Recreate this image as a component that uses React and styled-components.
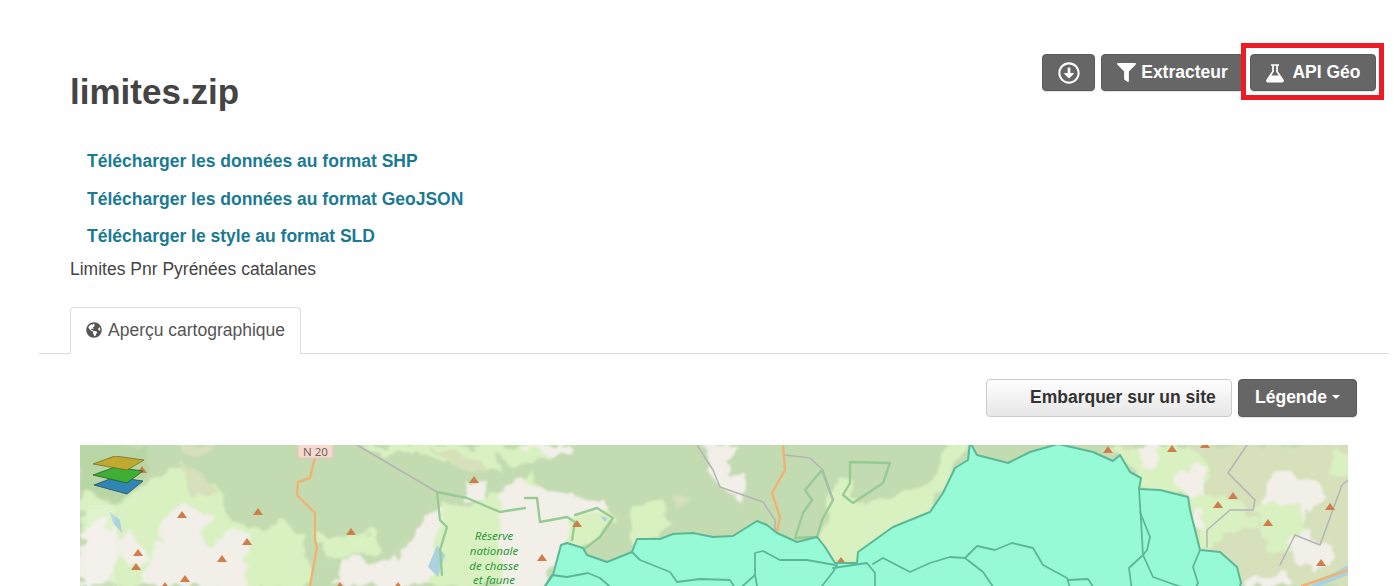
import React from "react";
import styled, { createGlobalStyle } from "styled-components";
import { FaFilter, FaGlobeAmericas, FaRegArrowAltCircleDown } from "react-icons/fa";

const GlobalStyle = createGlobalStyle`
    html, body {
        margin: 0;
        height: 586px;
        overflow: hidden;
        background: #fff;
    }
    body {
        font-family: "Liberation Sans", Arial, sans-serif;
        font-size: 17.5px;
        color: #444;
    }
`;

const Page = styled.div`
    width: 1350px;
    margin-left: 39px;
    padding-top: 54px;
`;

const Header = styled.header`
    display: flex;
    justify-content: space-between;
    align-items: flex-start;
    padding: 0 13px 0 31px;
`;

const Title = styled.h1`
    margin: 19px 0 0;
    font-size: 35px;
    line-height: 38px;
    font-weight: 700;
    color: #444;
`;

const Actions = styled.div`
    display: flex;
    gap: 6px;
`;

const Button = styled.a`
    display: inline-flex;
    align-items: center;
    justify-content: center;
    gap: 5px;
    box-sizing: border-box;
    width: ${p => p.$width}px;
    height: ${p => p.$height || 37}px;
    padding-bottom: ${p => (p.$height ? 2 : 0)}px;
    border: 1px solid #5a5a5a;
    border-radius: 4px;
    background: #666;
    color: #fff;
    font-weight: 700;
    font-size: 17.5px;
    white-space: nowrap;
    box-shadow: 0 1px 1px rgba(0, 0, 0, 0.12);
`;

const Highlighted = styled.div`
    position: relative;

    &::after {
        content: "";
        position: absolute;
        left: -9px;
        top: -11px;
        right: -8px;
        bottom: -9px;
        border: 5px solid #ed1c24;
    }
`;

const Links = styled.ul`
    list-style: none;
    margin: 39px 0 0;
    padding: 0 0 0 48px;
`;

const LinkItem = styled.li`
    font-weight: 700;
    line-height: 22px;
    color: #1a7a94;
    margin-bottom: 15.5px;

    &:last-child {
        margin-bottom: 0;
    }
`;

const Description = styled.p`
    margin: 11px 0 0;
    padding-left: 31px;
    line-height: 22px;
`;

const TabBar = styled.div`
    display: flex;
    margin-top: 27px;
    padding-left: 31px;
    border-bottom: 1px solid #ddd;
    height: 46px;
`;

const Tab = styled.div`
    display: flex;
    align-items: center;
    gap: 6px;
    box-sizing: border-box;
    width: 231px;
    height: 47px;
    padding: 0 0 2px 15px;
    background: #fff;
    border: 1px solid #ddd;
    border-bottom: none;
    border-radius: 4px 4px 0 0;
    color: #555;
`;

const Toolbar = styled.div`
    display: flex;
    justify-content: flex-end;
    gap: 6px;
    margin-top: 25px;
    padding-right: 32px;
`;

const EmbedButton = styled.a`
    display: flex;
    align-items: center;
    box-sizing: border-box;
    width: 246px;
    height: 38px;
    padding: 0 0 2px 43px;
    border: 1px solid #ccc;
    border-radius: 4px;
    background: linear-gradient(#fff, #e6e6e6);
    color: #333;
    font-weight: 700;
`;

const Caret = styled.span`
    width: 0;
    height: 0;
    border-left: 4px solid transparent;
    border-right: 4px solid transparent;
    border-top: 4px solid #fff;
`;

const FlaskIcon = styled.svg`
    flex: none;
    margin-right: 2px;
`;

const MapFrame = styled.div`
    position: relative;
    width: 1268px;
    height: 141px;
    margin: 28px 0 0 41px;
    overflow: hidden;
`;

const MapCanvas = styled.svg`
    display: block;
`;

const ZoomGhost = styled.div`
    position: absolute;
    left: 7px;
    top: 60px;
    width: 28px;
    height: 90px;
    border-radius: 4px;
    background: rgba(255, 255, 255, 0.16);
`;

const LayersIcon = styled.svg`
    position: absolute;
    left: 13px;
    top: 11px;
`;

const forest = "#c3dbb0";
const light = "#d9f1c1";
const scrub = "#d6e0bb";
const bare = "#f2efe9";

// terrain patches, in map coordinates
const patches = [
    ["#b8d5a6", "0,0 68,0 72,30 40,50 0,52"],
    [scrub, "100,0 135,0 128,10 102,12"],
    [light, "0,52 33,55 73,38 90,25 137,38 147,72 170,82 203,78 225,92 228,141 0,141"],
    [scrub, "98,20 130,30 138,50 108,50"],
    [bare, "0,90 28,70 40,100 30,141 0,141"],
    [bare, "84,72 105,60 130,70 118,90 135,100 155,85 172,90 160,110 170,141 60,141 75,105"],
    [bare, "38,90 60,92 70,115 50,125 40,110"],
    [light, "240,90 295,88 305,108 270,112 240,108"],
    [bare, "262,112 300,118 330,105 345,68 362,65 358,100 350,141 255,141"],
    [light, "320,10 420,30 425,0 270,0"],
    [scrub, "345,5 395,10 410,30 385,25"],
    [bare, "385,40 408,40 412,52 385,52"],
    [light, "362,60 420,50 450,30 470,60 420,141 350,141"],
    [bare, "420,50 435,30 465,45 500,50 515,55 530,50 530,75 503,103 480,100 470,120 465,141 420,141"],
    [light, "495,70 530,65 532,80 505,105 485,100"],
    [light, "420,0 490,0 470,12 430,20"],
    [bare, "440,2 490,0 487,8 460,10"],
    [light, "550,55 580,62 590,75 580,94 557,94 545,82"],
    [scrub, "592,50 610,55 605,66 595,62"],
    [bare, "620,0 660,0 647,18 670,35 660,55 640,42 633,28 627,15"],
    [light, "740,92 750,52 760,32 780,58 820,48 850,38 850,70 777,118 755,118"],
    [forest, "780,20 808,22 802,36 775,55 766,50"],
    [light, "870,0 890,0 888,15 875,23 865,48 850,67 850,30"],
    [scrub, "1035,0 1300,0 1300,141 1150,141 1120,105 1105,50"],
    [light, "1020,5 1110,0 1130,30 1110,52 1062,44 1060,32 1040,10"],
    [bare, "1058,0 1082,0 1072,22 1060,22"],
    [bare, "1097,30 1122,18 1125,60 1110,55 1100,40"],
    [light, "1110,55 1165,55 1180,80 1140,90 1120,105"],
    [bare, "1110,70 1122,65 1125,90 1115,85"],
    [bare, "1195,25 1230,35 1250,50 1225,70 1210,95 1180,70"],
    [light, "1175,60 1220,60 1225,100 1190,105"],
    [bare, "1205,90 1245,85 1250,120 1225,125"],
    [scrub, "1225,60 1250,70 1248,100 1230,100"],
    [light, "1250,10 1268,10 1268,30 1250,28"],
    [bare, "1170,130 1210,128 1205,141 1165,141"],
];

// runs a little past the bottom and top of the map so that its closing edge stays hidden
const OUTER = "460,148 473,130 481,100 487,98 503,103 507,110 527,117 552,107 557,94 580,94 593,89 613,88 633,92 653,91 677,76 687,80 697,88 717,97 737,92 745,102 755,118 777,118 778,107 813,82 850,67 863,48 875,23 888,15 890,-3 897,10 928,18 950,7 978,-1 1013,7 1033,16 1040,10 1050,27 1061,33 1059,44 1080,45 1108,52 1110,65 1120,105 1140,107 1157,122 1161,138 1158,148";

const innerBorders = [
    "552,107 560,115 590,127 597,137 620,134 650,135 657,146",
    "462,146 472,130 487,132 508,128 520,133 535,146",
    "657,146 675,130 675,108 683,106 700,115 727,115 755,120",
    "675,130 678,146",
    "738,146 753,127 757,120",
    "753,123 787,118 795,128 795,146",
    "793,119 803,113 830,127 850,118 870,112 885,113 903,127 916,146",
    "885,113 897,101 915,105 932,98 953,103 963,120 987,133 991,146",
    "988,135 1008,134 1016,146",
    "1059,44 1061,75 1063,110 1049,123 1052,146",
    "1060,67 1070,92 1067,105 1063,110 1073,132 1090,138 1113,146",
    "1120,105 1113,122 1118,138 1114,146",
];

const parkBorders = [
    "357,47 387,53 420,67 445,63",
    "357,47 360,75 367,82 360,105 362,130",
    "445,53 457,53 460,77 487,72 495,77 492,95",
    "495,70 517,63 533,73 520,92 503,105",
    "725,45 742,25 753,55 742,75 737,92 715,93 723,68 732,55 725,45",
    "770,17 810,18 803,38 773,58 763,50 770,38 770,17",
];

const greyRoads = [
    "617,0 633,25 640,42 683,57 695,75 695,85",
    "705,10 730,13 743,25 753,55",
    "277,0 357,47",
    "1167,0 1148,28 1175,55 1173,65 1150,65 1127,85 1127,102",
    "1200,120 1215,90 1240,100 1262,40 1268,35",
];

const orangeRoads = [
    "235,12 230,33 218,37 217,50 235,68 235,95 237,102 230,141",
    "703,0 705,25 692,48 700,72 697,87",
    "1222,141 1268,125",
];

const lakes = [
    "348,122 357,100 365,110 358,132",
    "30,67 40,75 42,88 33,78",
    "520,71 528,73 525,77",
    "1230,141 1268,120 1268,130 1240,141",
];

const peaks = [
    [102, 70], [178, 67], [271, 87], [167, 97], [58, 108], [142, 114], [56, 122], [105, 134],
    [394, 35], [62, 25], [85, 141], [318, 141], [260, 141], [497, 79], [462, 113], [761, 116],
    [1028, 5], [1092, 4], [1125, 0], [1138, 60], [1153, 51], [1188, 78], [1250, 62], [1241, 118],
];

const reserveLines = [
    ["Réserve", 95],
    ["nationale", 110],
    ["de chasse", 125],
    ["et faune", 139],
];

const MapPreview = () => (
    <MapCanvas width="1268" height="141" viewBox="0 0 1268 141">
        <defs>
            <filter id="soft" x="-5%" y="-5%" width="110%" height="110%">
                <feTurbulence type="fractalNoise" baseFrequency="0.045" numOctaves="3" seed="4" result="noise" />
                <feDisplacementMap in="SourceGraphic" in2="noise" scale="22" xChannelSelector="R" yChannelSelector="G" />
                <feGaussianBlur stdDeviation="1.2" />
            </filter>
            <filter id="thin" x="-5%" y="-10%" width="110%" height="120%">
                <feGaussianBlur stdDeviation="0.55" />
            </filter>
        </defs>
        <rect width="1268" height="141" fill={forest} />
        <g filter="url(#soft)">
            {patches.map(([fill, points]) => (
                <polygon key={points} fill={fill} points={points} />
            ))}
        </g>
        <g filter="url(#thin)" fill="none" strokeLinejoin="round" strokeLinecap="round">
            {lakes.map(points => (
                <polygon key={points} fill="#aad3df" points={points} />
            ))}
            {parkBorders.map(points => (
                <polyline key={points} points={points} stroke="#96cc94" strokeWidth="2.4" />
            ))}
            {greyRoads.map(points => (
                <polyline key={points} points={points} stroke="#b4b4b8" strokeWidth="1.5" />
            ))}
            {orangeRoads.map(points => (
                <polyline key={points} points={points} stroke="#f0b272" strokeWidth="2.4" />
            ))}
            {peaks.map(([x, y]) => (
                <polygon key={`${x}-${y}`} fill="#cf7d4a" points={`${x - 5},${y + 3} ${x},${y - 4} ${x + 5},${y + 3}`} />
            ))}
            <polygon points={OUTER} fill="#96fad6" stroke="#5ab896" strokeWidth="2" />
            {innerBorders.map(points => (
                <polyline key={points} points={points} stroke="#5ab896" strokeWidth="1.8" />
            ))}
        </g>
        <rect x="218" y="-3" width="35" height="16" rx="2" fill="#f6d9cf" stroke="#ebc4b6" />
        <text x="235.5" y="11" textAnchor="middle" fontFamily="'Noto Sans', sans-serif" fontSize="11.5" fill="#6e6460">
            N 20
        </text>
        {reserveLines.map(([label, y]) => (
            <text
                key={label}
                x="414"
                y={y}
                textAnchor="middle"
                fontFamily="'Noto Sans', sans-serif"
                fontStyle="italic"
                fontSize="11.5"
                fill="#2f9a3f"
            >
                {label}
            </text>
        ))}
    </MapCanvas>
);

const Layers = () => (
    <LayersIcon width="52" height="40" viewBox="0 0 52 40">
        <polygon points="1,29 22,21 50,25 34,38" fill="#2f85b5" stroke="#1d3f4f" strokeWidth="0.7" />
        <polygon points="0,19 22,11 50,15 34,27" fill="#3fae35" stroke="#24551f" strokeWidth="0.7" />
        <polygon points="0,8 22,0 51,4 34,14" fill="#bfa92f" stroke="#6d6320" strokeWidth="0.7" />
    </LayersIcon>
);

const Flask = () => (
    <FlaskIcon width="20" height="20" viewBox="0 0 20 20">
        <path
            d="M6 2h8M8 2.5v6L2.2 17a1 1 0 0 0 .8 1.6h14a1 1 0 0 0 .8-1.6L12 8.5v-6"
            fill="none"
            stroke="#fff"
            strokeWidth="1.7"
        />
        <path d="M5.5 12.5h9l3 5.5h-15z" fill="#fff" />
    </FlaskIcon>
);

const App = () => (
    <Page>
        <GlobalStyle />
        <Header>
            <Title>limites.zip</Title>
            <Actions>
                <Button $width={53}>
                    <FaRegArrowAltCircleDown size={22} />
                </Button>
                <Button $width={143}>
                    <FaFilter size={19} />
                    Extracteur
                </Button>
                <Highlighted>
                    <Button $width={126}>
                        <Flask />
                        API Géo
                    </Button>
                </Highlighted>
            </Actions>
        </Header>
        <Links>
            <LinkItem>Télécharger les données au format SHP</LinkItem>
            <LinkItem>Télécharger les données au format GeoJSON</LinkItem>
            <LinkItem>Télécharger le style au format SLD</LinkItem>
        </Links>
        <Description>Limites Pnr Pyrénées catalanes</Description>
        <TabBar>
            <Tab>
                <FaGlobeAmericas size={16} />
                Aperçu cartographique
            </Tab>
        </TabBar>
        <Toolbar>
            <EmbedButton>Embarquer sur un site</EmbedButton>
            <Button $width={119} $height={38}>
                Légende
                <Caret />
            </Button>
        </Toolbar>
        <MapFrame>
            <MapPreview />
            <ZoomGhost />
            <Layers />
        </MapFrame>
    </Page>
);

export default App;
